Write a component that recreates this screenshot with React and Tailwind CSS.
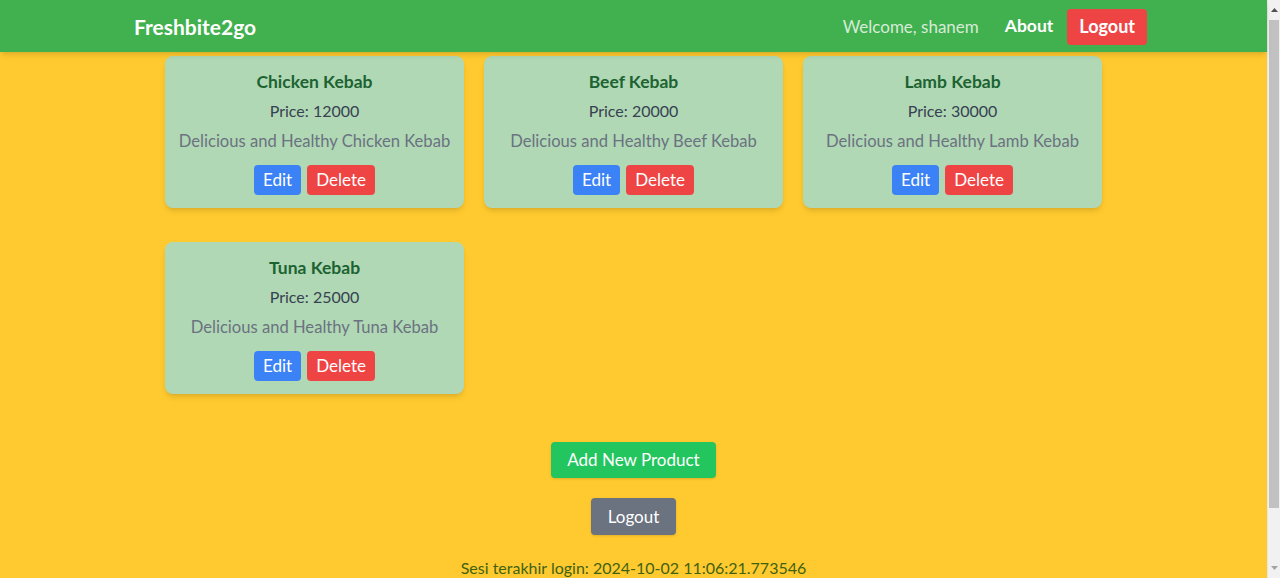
const products = [
  { name: "Chicken Kebab", price: 12000, desc: "Delicious and Healthy Chicken Kebab" },
  { name: "Beef Kebab", price: 20000, desc: "Delicious and Healthy Beef Kebab" },
  { name: "Lamb Kebab", price: 30000, desc: "Delicious and Healthy Lamb Kebab" },
  { name: "Tuna Kebab", price: 25000, desc: "Delicious and Healthy Tuna Kebab" },
];

const ProductCard = ({ product }) => (
  <div className="bg-[#b0d8b5] rounded-lg shadow-md px-3 pt-3 pb-[13px] text-center">
    <h2 className="text-[17.5px] leading-[26px] mt-[1px] font-bold text-[#1d6332]">{product.name}</h2>
    <p className="mt-[4px] text-[16px] leading-6 text-[#374151]">Price: {product.price}</p>
    <p className="mt-[6px] text-[16.6px] leading-6 text-[#6b7280]">{product.desc}</p>
    <div className="mt-3 flex justify-center gap-[6px]">
      <button className="h-[30px] px-[9px] rounded bg-[#3b82f6] text-white text-[17px]">Edit</button>
      <button className="h-[30px] px-[9px] rounded bg-[#ef4444] text-white text-[17px]">Delete</button>
    </div>
  </div>
);

const Scrollbar = () => (
  <div className="w-[13px] flex-none flex flex-col bg-[#f1f1f1] border-l border-[#e6e6e6]">
    <div className="h-[20px] flex items-center justify-center">
      <svg width="7" height="4" viewBox="0 0 7 4">
        <path d="M3.5 0L7 4H0z" fill="#505050" />
      </svg>
    </div>
    <div className="h-[488px] mx-[1px] bg-[#c1c1c1]" />
    <div className="flex-1" />
    <div className="h-[20px] flex items-center justify-center">
      <svg width="7" height="4" viewBox="0 0 7 4">
        <path d="M0 0H7L3.5 4z" fill="#a3a3a3" />
      </svg>
    </div>
  </div>
);

export default function App() {
  return (
    <div className="flex h-[578px] overflow-hidden font-['Lato',sans-serif]">
      <div className="w-[1267px] flex-none bg-[#ffca2f]">
        {/* Navbar */}
        <nav className="relative z-10 h-[52px] bg-[#41b04f] shadow-md flex items-center justify-between pl-[134px] pr-[120px]">
          <span className="text-[21px] font-bold text-white mt-[1px]">Freshbite2go</span>
          <div className="flex items-center mt-[1px]">
            <span className="text-[#d6ecd8] text-[17px]">Welcome, shanem</span>
            <a href="#" className="ml-[26px] text-white font-bold text-[17.5px]">About</a>
            <button className="ml-[14px] h-9 px-[12px] rounded bg-[#ef4444] text-white font-bold text-[18px]">
              Logout
            </button>
          </div>
        </nav>

        {/* Products */}
        <div className="w-[937px] mx-auto mt-1 grid grid-cols-3 gap-x-5 gap-y-[34px]">
          {products.map((p) => (
            <ProductCard key={p.name} product={p} />
          ))}
        </div>

        {/* Actions */}
        <div className="mt-[48px] flex flex-col items-center">
          <button className="h-9 px-4 rounded bg-[#22c55e] text-white text-[17px] shadow-sm">
            Add New Product
          </button>
          <button className="mt-5 h-[37px] px-[17px] rounded bg-[#6b7280] text-white text-[17px] shadow-sm">
            Logout
          </button>
          <p className="mt-[21px] text-[#3f6212]">Sesi terakhir login: 2024-10-02 11:06:21.773546</p>
        </div>
      </div>
      <Scrollbar />
    </div>
  );
}
